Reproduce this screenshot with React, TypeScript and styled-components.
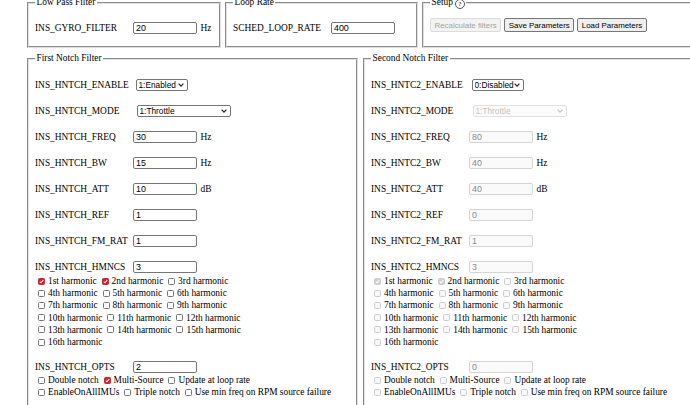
import React from "react";
import styled, { createGlobalStyle } from "styled-components";

const GlobalStyle = createGlobalStyle`
  html, body {
    margin: 0;
    padding: 0;
    background: #fff;
    overflow: hidden;
  }
  body {
    font-family: "Liberation Serif", "Times New Roman", serif;
    font-size: 9.4px;
    color: #000;
  }
`;

const Page = styled.div`
  width: 720px;
  margin-top: -3px;
  padding-left: 27px;
  display: flex;
  flex-direction: column;
  gap: 5px;
`;

const TopRow = styled.div`
  display: flex;
  gap: 4px;
`;

const Columns = styled.div`
  display: flex;
  gap: 5px;
`;

const Fieldset = styled.fieldset<{ $w: number }>`
  box-sizing: border-box;
  flex: none;
  width: ${p => p.$w}px;
  min-width: 0;
  margin: 0;
  padding: 0 6px 12px;
  border: 2px groove #e0e0e0;
`;

const Legend = styled.legend`
  padding: 0 1.5px;
  line-height: 11px;
`;

const HelpMark = styled.span`
  display: inline-block;
  width: 8px;
  height: 8px;
  margin-left: 2px;
  border: 1px solid #555;
  border-radius: 50%;
  font-size: 7px;
  line-height: 8px;
  text-align: center;
  vertical-align: -1px;
`;

const Row = styled.div<{ $top?: number }>`
  display: flex;
  align-items: center;
  height: 13px;
  margin-top: ${p => p.$top ?? 13}px;
  white-space: nowrap;
`;

const Label = styled.span`
  flex: none;
  width: 98px;
`;

const TextInput = styled.input`
  box-sizing: border-box;
  width: 64px;
  height: 12px;
  margin: 0;
  padding: 0 2px;
  border: 1px solid #767676;
  border-radius: 2px;
  background: #fff;
  font: 8.9px "Liberation Sans", Arial, sans-serif;
  color: #000;

  &:disabled {
    border-color: #d4d4d4;
    background: #fafafa;
    color: #8c8c8c;
  }
`;

const SelectWrap = styled.span<{ $w: number; $ml: number }>`
  position: relative;
  display: inline-block;
  flex: none;
  width: ${p => p.$w}px;
  height: 12px;
  margin-left: ${p => p.$ml}px;

  svg {
    position: absolute;
    right: 4px;
    top: 4px;
    width: 6px;
    height: 4px;
    pointer-events: none;
  }
`;

const Select = styled.select`
  box-sizing: border-box;
  appearance: none;
  display: block;
  width: 100%;
  height: 12px;
  margin: 0;
  padding: 0 0 0 2px;
  border: 1px solid #767676;
  border-radius: 2px;
  background: #fff;
  font: 8.3px "Liberation Sans", Arial, sans-serif;
  line-height: 10px;
  color: #000;

  &:disabled {
    border-color: #d6d6d6;
    background: #fafafa;
    color: #a8a8a8;
  }
`;

const Unit = styled.span`
  margin-left: 3.5px;
`;

const ButtonRow = styled.div`
  display: flex;
  gap: 3px;
  height: 14px;
  margin-top: 9px;
`;

const Button = styled.button`
  box-sizing: border-box;
  height: 14px;
  margin: 0;
  padding: 0 3.5px;
  border: 1px solid #767676;
  border-radius: 2px;
  background: #efefef;
  font: 7.9px "Liberation Sans", Arial, sans-serif;
  color: #000;

  &:disabled {
    border-color: #dcdcdc;
    background: #f3f3f3;
    color: #a3a3a3;
  }
`;

const CheckGroup = styled.div<{ $top: number }>`
  margin-top: ${p => p.$top}px;
`;

const CheckLine = styled.div`
  height: 12.2px;
  line-height: 12.2px;
  white-space: nowrap;
`;

const CheckItem = styled.label`
  display: inline-flex;
  align-items: center;
  margin-right: 1.8px;
`;

const Box = styled.span<{ $on: boolean; $off: boolean }>`
  box-sizing: border-box;
  display: inline-block;
  width: 7px;
  height: 7px;
  margin: 0 3px 0 3px;
  border: 1px solid
    ${p => (p.$off ? (p.$on ? "#cfcfcf" : "#cdcdcd") : p.$on ? "#d3202a" : "#767676")};
  border-radius: 1.5px;
  background: ${p => (p.$off ? (p.$on ? "#cfcfcf" : "#f8f8f8") : p.$on ? "#d3202a" : "#fff")};

  svg {
    display: block;
    width: 100%;
    height: 100%;
  }
`;

type Notch = {
  prefix: string;
  enable: string;
  mode: string;
  freq: string;
  bw: string;
  att: string;
  refv: string;
  fmRat: string;
  hmncs: string;
  opts: string;
  harmonics: number[];
  optsOn: string[];
  disabled: boolean;
};

const ordinals = ["1st", "2nd", "3rd", "4th", "5th", "6th", "7th", "8th", "9th", "10th", "11th", "12th", "13th", "14th", "15th", "16th"];
const harmonicLines = [[0, 1, 2], [3, 4, 5], [6, 7, 8], [9, 10, 11], [12, 13, 14], [15]];
const optLines = [
  ["Double notch", "Multi-Source", "Update at loop rate"],
  ["EnableOnAllIMUs", "Triple notch", "Use min freq on RPM source failure"],
];

const notches: Notch[] = [
  {
    prefix: "INS_HNTCH",
    enable: "1:Enabled",
    mode: "1:Throttle",
    freq: "30",
    bw: "15",
    att: "10",
    refv: "1",
    fmRat: "1",
    hmncs: "3",
    opts: "2",
    harmonics: [0, 1],
    optsOn: ["Multi-Source"],
    disabled: false,
  },
  {
    prefix: "INS_HNTC2",
    enable: "0:Disabled",
    mode: "1:Throttle",
    freq: "80",
    bw: "40",
    att: "40",
    refv: "0",
    fmRat: "1",
    hmncs: "3",
    opts: "0",
    harmonics: [0, 1],
    optsOn: [],
    disabled: true,
  },
];

function Check({ on, off, text }: { on: boolean; off: boolean; text: string }) {
  return (
    <CheckItem>
      <Box $on={on} $off={off}>
        {on && (
          <svg viewBox="0 0 5 5">
            <polyline points="0.8,2.6 2,3.8 4.3,1.1" fill="none" stroke="#fff" strokeWidth="1.1" />
          </svg>
        )}
      </Box>
      {text}
    </CheckItem>
  );
}

function Dropdown({ w, ml, value, options, off }: { w: number; ml: number; value: string; options: string[]; off?: boolean }) {
  return (
    <SelectWrap $w={w} $ml={ml}>
      <Select defaultValue={value} disabled={off}>
        {options.map(o => (
          <option key={o}>{o}</option>
        ))}
      </Select>
      <svg viewBox="0 0 6 4">
        <polyline points="0.6,0.7 3,3.1 5.4,0.7" fill="none" stroke={off ? "#c4c4c4" : "#222"} strokeWidth="1.2" />
      </svg>
    </SelectWrap>
  );
}

function ParamRow({ name, value, unit, off }: { name: string; value: string; unit?: string; off: boolean }) {
  return (
    <Row>
      <Label>{name}</Label>
      <TextInput defaultValue={value} disabled={off} />
      {unit && <Unit>{unit}</Unit>}
    </Row>
  );
}

function NotchFilter({ title, n }: { title: string; n: Notch }) {
  const off = n.disabled;
  return (
    <Fieldset $w={331}>
      <Legend>{title}</Legend>
      <Row $top={14}>
        <Label>{n.prefix}_ENABLE</Label>
        <Dropdown w={52} ml={2.5} value={n.enable} options={["0:Disabled", "1:Enabled"]} />
      </Row>
      <Row>
        <Label>{n.prefix}_MODE</Label>
        <Dropdown
          w={94}
          ml={3.5}
          value={n.mode}
          off={off}
          options={["0:Fixed", "1:Throttle", "2:RPM Sensor", "3:ESC Telemetry", "4:FFT"]}
        />
      </Row>
      <ParamRow name={`${n.prefix}_FREQ`} value={n.freq} unit="Hz" off={off} />
      <ParamRow name={`${n.prefix}_BW`} value={n.bw} unit="Hz" off={off} />
      <ParamRow name={`${n.prefix}_ATT`} value={n.att} unit="dB" off={off} />
      <ParamRow name={`${n.prefix}_REF`} value={n.refv} off={off} />
      <ParamRow name={`${n.prefix}_FM_RAT`} value={n.fmRat} off={off} />
      <ParamRow name={`${n.prefix}_HMNCS`} value={n.hmncs} off={off} />
      <CheckGroup $top={2}>
        {harmonicLines.map((line, i) => (
          <CheckLine key={i}>
            {line.map(h => (
              <Check key={h} on={n.harmonics.includes(h)} off={off} text={`${ordinals[h]} harmonic`} />
            ))}
          </CheckLine>
        ))}
      </CheckGroup>
      <Row $top={12}>
        <Label>{n.prefix}_OPTS</Label>
        <TextInput defaultValue={n.opts} disabled={off} />
      </Row>
      <CheckGroup $top={1}>
        {optLines.map((line, i) => (
          <CheckLine key={i}>
            {line.map(o => (
              <Check key={o} on={n.optsOn.includes(o)} off={off} text={o} />
            ))}
          </CheckLine>
        ))}
      </CheckGroup>
    </Fieldset>
  );
}

export default function App() {
  return (
    <>
      <GlobalStyle />
      <Page>
        <TopRow>
          <Fieldset $w={194}>
            <Legend>Low Pass Filter</Legend>
            <ParamRow name="INS_GYRO_FILTER" value="20" unit="Hz" off={false} />
          </Fieldset>
          <Fieldset $w={193}>
            <Legend>Loop Rate</Legend>
            <ParamRow name="SCHED_LOOP_RATE" value="400" off={false} />
          </Fieldset>
          <Fieldset $w={272}>
            <Legend>
              Setup<HelpMark>?</HelpMark>
            </Legend>
            <ButtonRow>
              <Button disabled>Recalculate filters</Button>
              <Button>Save Parameters</Button>
              <Button>Load Parameters</Button>
            </ButtonRow>
          </Fieldset>
        </TopRow>
        <Columns>
          {notches.map((n, i) => (
            <NotchFilter key={n.prefix} title={i === 0 ? "First Notch Filter" : "Second Notch Filter"} n={n} />
          ))}
        </Columns>
      </Page>
    </>
  );
}
